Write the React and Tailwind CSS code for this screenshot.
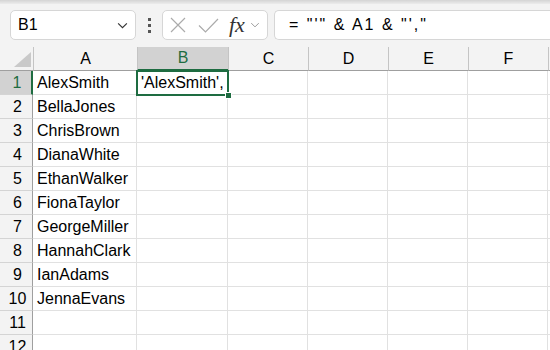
import React from 'react';

const cols = [
  { name: 'A', w: 'w-[104px]' },
  { name: 'B', w: 'w-[91px]' },
  { name: 'C', w: 'w-[80px]' },
  { name: 'D', w: 'w-[80px]' },
  { name: 'E', w: 'w-[80px]' },
  { name: 'F', w: 'w-[80px]' },
];

const names = [
  'AlexSmith',
  'BellaJones',
  'ChrisBrown',
  'DianaWhite',
  'EthanWalker',
  'FionaTaylor',
  'GeorgeMiller',
  'HannahClark',
  'IanAdams',
  'JennaEvans',
  '',
  '',
];

function Chevron({ className }) {
  return (
    <svg className={className} viewBox="0 0 12 8" fill="none" stroke="currentColor" strokeWidth="1.3">
      <path d="M1 1.5 L6 6.5 L11 1.5" />
    </svg>
  );
}

function FormulaBar() {
  return (
    <div className="h-[47px] bg-[#f3f3f3] flex flex-col">
      <div className="h-[4px] bg-gradient-to-b from-[#d4d4d4] to-[#ececec]" />
      <div className="flex items-center pt-[6px]">
        {/* Name box */}
        <div className="ml-[10px] w-[126px] h-[30px] bg-white border border-[#d6d6d6] rounded-[5px] flex items-center justify-between pl-[7px] pr-[7px]">
          <span className="text-[16px] text-black">B1</span>
          <Chevron className="w-[11px] h-[7px] text-[#333]" />
        </div>
        {/* Dots */}
        <div className="w-[26px] flex flex-col items-center gap-[3px]">
          <div className="w-[3px] h-[3px] bg-[#555]" />
          <div className="w-[3px] h-[3px] bg-[#555]" />
          <div className="w-[3px] h-[3px] bg-[#555]" />
        </div>
        {/* Cancel / Enter / fx */}
        <div className="w-[106px] h-[30px] bg-white border border-[#d6d6d6] rounded-[5px] flex items-center pl-[7px]">
          <svg className="w-[16px] h-[16px] text-[#ababab]" viewBox="0 0 16 16" fill="none" stroke="currentColor" strokeWidth="1.2">
            <path d="M1 1 L15 15 M15 1 L1 15" />
          </svg>
          <svg className="ml-[12px] w-[21px] h-[15px] text-[#ababab]" viewBox="0 0 21 15" fill="none" stroke="currentColor" strokeWidth="1.2">
            <path d="M1 7.5 L7.5 14 L20 1" />
          </svg>
          <span className="ml-[10px] text-[22px] italic text-[#333] leading-none" style={{ fontFamily: '"Liberation Serif", serif' }}>fx</span>
          <Chevron className="ml-[5px] w-[10px] h-[6px] text-[#999]" />
        </div>
        {/* Formula */}
        <div className="ml-[6px] flex-1 h-[30px] bg-white border border-r-0 border-[#d6d6d6] rounded-l-[5px] flex items-center pl-[14px]">
          <span className="text-[16px] text-black whitespace-pre tracking-[2px]">= "'" &amp; A1 &amp; "',"</span>
        </div>
      </div>
    </div>
  );
}

function HeaderRow() {
  return (
    <div className="flex h-[24px] bg-[#f3f3f3]">
      <div className="w-[33px] h-full border-b border-[#9f9f9f] flex items-end justify-end pr-[2px] pb-[3px]">
        <svg className="w-[17px] h-[15px]" viewBox="0 0 17 15">
          <path d="M17 0 L17 15 L0 15 Z" fill="#c9c9c9" />
        </svg>
      </div>
      {cols.map((c) => {
        const sel = c.name === 'B';
        return (
          <div
            key={c.name}
            className={`${c.w} h-full flex items-center justify-center text-[16px] border-l ${
              sel
                ? 'bg-[#d2d2d2] border-[#c4c4c4] border-b-2 border-b-[#1e6c41] text-[#1e6c41]'
                : 'border-[#c4c4c4] border-b border-b-[#9f9f9f] text-black'
            }`}
          >
            {c.name}
          </div>
        );
      })}
      <div className="flex-1 border-l border-[#c4c4c4] border-b border-b-[#9f9f9f]" />
    </div>
  );
}

function Row({ index, name }) {
  const first = index === 1;
  return (
    <div className="flex h-[24px]">
      <div
        className={`w-[33px] h-full flex items-center justify-center pl-[3px] text-[16px] border-b border-[#d4d4d4] ${
          first ? 'bg-[#d2d2d2] border-r-2 border-r-[#1e6c41] text-[#1e6c41]' : 'bg-[#f3f3f3] border-r border-r-[#9f9f9f] text-black'
        }`}
      >
        {index}
      </div>
      {cols.map((c) => {
        let text = '';
        if (c.name === 'A') text = name;
        if (c.name === 'B' && first) text = "'AlexSmith',";
        return (
          <div
            key={c.name}
            className={`${c.w} h-full flex items-center pl-[4px] text-[16px] text-black border-r border-b border-[#e1e1e1] whitespace-nowrap overflow-visible`}
          >
            {text}
          </div>
        );
      })}
      <div className="flex-1 border-b border-[#e1e1e1]" />
    </div>
  );
}

export default function App() {
  return (
    <div
      className="w-[550px] h-[350px] overflow-hidden bg-white relative"
      style={{ fontFamily: '"Liberation Sans", Arial, sans-serif' }}
    >
      <FormulaBar />
      <HeaderRow />
      {names.map((n, i) => (
        <Row key={i} index={i + 1} name={n} />
      ))}
      {/* Selected cell B1 */}
      <div className="absolute left-[136px] top-[70px] w-[93px] h-[26px] border-2 border-[#1e6c41] pointer-events-none" />
      <div className="absolute left-[225px] top-[92px] w-[7px] h-[7px] bg-[#1e6c41] border border-white" />
    </div>
  );
}
